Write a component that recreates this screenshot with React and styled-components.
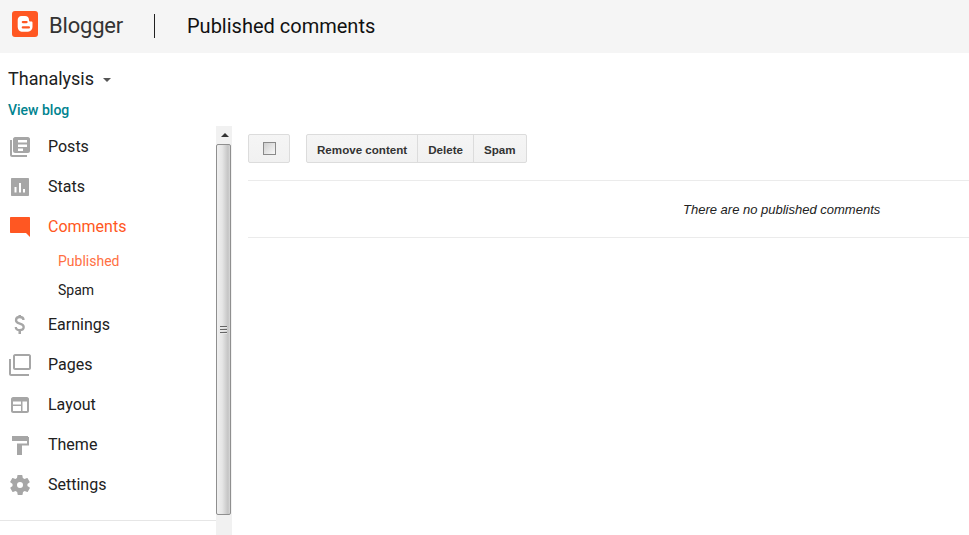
import React from "react";
import styled, { createGlobalStyle } from "styled-components";

const Global = createGlobalStyle`
  html, body { margin: 0; padding: 0; height: 100%; overflow: hidden; background: #fff; }
  body { font-family: Roboto, "Liberation Sans", sans-serif; color: #212121; }
  #root { height: 100%; }
`;
const Page = styled.div`display: flex; flex-direction: column; height: 535px; width: 969px; overflow: hidden;`;
const Header = styled.header`
  height: 53px; flex: none; background: #f5f5f5; display: flex; align-items: center; padding-left: 12px; box-sizing: border-box;
`;
const Logo = styled.svg`width: 26px; height: 26px; flex: none; margin-top: -5px;`;
const Brand = styled.span`font-size: 22px; color: #333; margin-left: 11px; width: 105px; margin-top: -3px; letter-spacing: -0.2px;`;
const Divider = styled.span`width: 1px; height: 24px; background: #212121; margin-right: 32px; margin-top: -1px;`;
const Title = styled.h1`font-size: 20px; font-weight: 400; margin: -1px 0 0; color: #111;`;
const Body = styled.div`display: flex; flex: 1; min-height: 0;`;
const Sidebar = styled.aside`width: 232px; flex: none; display: flex; flex-direction: column; min-height: 0;`;
const BlogHead = styled.div`height: 73px; flex: none; padding: 14px 0 0 8px; box-sizing: border-box;`;
const BlogName = styled.div`font-size: 18px; line-height: 24px; color: #212121; display: flex; align-items: center;`;
const Caret = styled.span`
  width: 0; height: 0; border-left: 4px solid transparent; border-right: 4px solid transparent; border-top: 4px solid #555; margin-left: 9px; margin-top: 1px;
`;
const ViewBlog = styled.a`display: block; margin-top: 10px; font-size: 14px; line-height: 18px; font-weight: 500; color: #00838f;`;
const NavArea = styled.div`display: flex; flex: 1; min-height: 0;`;
const Nav = styled.nav`width: 216px; flex: none; height: 394px; border-bottom: 1px solid #e6e6e6; display: flex; flex-direction: column;`;
const NavItem = styled.div`
  height: 40px; flex: none; display: flex; align-items: center; padding-left: 8px; font-size: 16px; color: ${p => (p.$active ? "#ff5722" : "#212121")};
`;
const NavIcon = styled.svg`width: 24px; height: 24px; margin-right: 16px; flex: none; fill: ${p => (p.$active ? "#ff5722" : "#a6a6a6")};`;
const SubList = styled.div`display: flex; flex-direction: column; height: 58px; flex: none; padding-top: 1px; box-sizing: border-box;`;
const SubItem = styled.div`
  height: 29px; flex: none; line-height: 29px; padding-left: 58px; font-size: 14px; color: ${p => (p.$active ? "#ff7043" : "#212121")};
`;
const Scrollbar = styled.div`width: 16px; flex: none; background: #f1f1f1; display: flex; flex-direction: column;`;
const ArrowBox = styled.div`height: 18px; flex: none; display: flex; align-items: center; justify-content: center;`;
const Arrow = styled.span`width: 0; height: 0; border-left: 4px solid transparent; border-right: 4px solid transparent; border-bottom: 4px solid #333; margin-left: 1px;`;
const Thumb = styled.div`
  height: 371px; box-sizing: border-box; border: 1px solid #8f8f8f; border-radius: 2px; width: 15px; flex: none;
  background: linear-gradient(to right, #f0f0f0 0%, #e6e6e6 40%, #c4c4c4 85%, #d8d8d8 100%);
  display: flex; align-items: center; justify-content: center;
`;
const Grip = styled.span`
  width: 7px; height: 8px; margin-top: 1px;
  background: repeating-linear-gradient(to bottom, #666 0, #666 1px, #e8e8e8 1px, #e8e8e8 2px, transparent 2px, transparent 3px);
`;
const Main = styled.main`flex: 1; min-width: 0; padding: 81px 0 0 16px;`;
const Toolbar = styled.div`display: flex; gap: 16px; height: 46px; border-bottom: 1px solid #ebebeb;`;
const SelectButton = styled.div`
  width: 42px; height: 29px; box-sizing: border-box; border: 1px solid #dcdcdc; border-radius: 2px; background: linear-gradient(#f5f5f5, #f1f1f1); display: flex; align-items: center; justify-content: center;
`;
const Check = styled.span`width: 13px; height: 13px; box-sizing: border-box; border: 1px solid #8a8a8a; background: linear-gradient(135deg, #cfcfcf, #f8f8f8);`;
const ButtonGroup = styled.div`display: flex; height: 29px; box-sizing: border-box; border: 1px solid #dcdcdc; border-radius: 2px; background: linear-gradient(#f5f5f5, #f1f1f1);`;
const ActionButton = styled.div`
  padding: 0 10px; font: bold 11.6px/29px "Liberation Sans", Arial, sans-serif; color: #333; & + & { border-left: 1px solid #dcdcdc; }
`;
const Empty = styled.div`
  height: 56px; border-bottom: 1px solid #ebebeb; font: italic 13px/57px "Liberation Sans", Arial, sans-serif; color: #222; padding-left: 435px;
`;

const items = [
  ["Posts", <><path d="M2 6h2v15h15v2H4c-1 0-2-1-2-2V6z" /><path fillRule="evenodd" d="M7 3h13c1 0 2 1 2 2v12c0 1-1 2-2 2H7c-1 0-2-1-2-2V5c0-1 1-2 2-2zm3 3v2.500h9V6h-9zm0 4.500V13h9v-2.500h-9zm0 4V17h5v-2.500h-5z" /></>],
  ["Stats", <path fillRule="evenodd" d="M4 4h16c.6 0 1 .4 1 1v16c0 .6-.4 1-1 1H4c-.6 0-1-.4-1-1V5c0-.6.4-1 1-1zm2.500 9v5.500h2V13h-2zm4.500-4v9.500h2V9h-2zm4 6v3.500h2V15h-2z" />],
  ["Comments", <path d="M3 3h18c.6 0 1 .4 1 1v19l-4-4H3c-.6 0-1-.4-1-1V4c0-.6.4-1 1-1z" />, true],
];
const rest = [
  ["Earnings", <><path d="M15.500 8c0-2.200-1.500-3-3.800-3S8 6.200 8 8.200c0 2.300 2 2.900 3.800 3.400 1.900.5 3.900 1.200 3.900 3.500 0 2.100-1.800 3.100-4 3.100-2.300 0-3.900-1-3.900-3.200" fill="none" stroke="#a6a6a6" strokeWidth="2.300" /><path d="M10.500 3h2.500v3h-2.500zM10.500 17h2.500v5h-2.500z" /></>],
  ["Pages", <><path d="M1 7h2v15h18v2H3c-1 0-2-1-2-2V7z" /><path fillRule="evenodd" d="M7 2h14c1 0 2 1 2 2v12c0 1-1 2-2 2H7c-1 0-2-1-2-2V4c0-1 1-2 2-2zm0 2v12h14V4H7z" /></>],
  ["Layout", <path fillRule="evenodd" d="M5 5h14c1 0 2 1 2 2v12c0 1-1 2-2 2H5c-1 0-2-1-2-2V7c0-1 1-2 2-2zm0 4.500V12.500h8V9.500H5zm0 4.500V19h8v-5H5zm9.500-4.500V19H19V9.500h-4.500z" />],
  ["Theme", <path d="M4 4h16v1h1v8.500h-7V23H9V11.500h10V9H4V4z" />],
  ["Settings", <path transform="translate(0 1)" d="M19.400 13c.04-.3.1-.7.1-1s-.04-.7-.1-1l2.100-1.600c.2-.2.2-.4.1-.6l-2-3.500c-.1-.2-.4-.3-.6-.2l-2.500 1c-.5-.4-1.100-.7-1.700-1l-.4-2.600c0-.3-.2-.5-.5-.5h-4c-.3 0-.5.2-.5.4l-.4 2.600c-.6.3-1.200.6-1.700 1l-2.500-1c-.2-.1-.5 0-.6.2l-2 3.500c-.1.200-.1.500.1.600L4.600 11c-.1.300-.1.700-.1 1s0 .7.1 1l-2.100 1.600c-.2.2-.2.400-.1.600l2 3.500c.1.2.4.3.6.2l2.500-1c.5.4 1.100.7 1.700 1l.4 2.600c0 .2.2.4.5.4h4c.3 0 .5-.2.5-.4l.4-2.600c.6-.3 1.200-.6 1.700-1l2.500 1c.2.1.5 0 .6-.2l2-3.500c.1-.2.1-.5-.1-.6L19.400 13zM12 15a3 3 0 1 1 0-6 3 3 0 0 1 0 6z" />],
];
const Row = ({ label, icon, active }) => (
  <NavItem $active={active}>
    <NavIcon $active={active} viewBox="0 0 24 24">{icon}</NavIcon>
    {label}
  </NavItem>
);

export default function App() {
  return (
    <Page>
      <Global />
      <Header>
        <Logo viewBox="0 0 26 26">
          <rect width="26" height="26" rx="3" fill="#ff5722" />
          <path fill="#fff" d="M9.500 5h3.500c2.500 0 4 1.500 4 4 0 1 .5 1.500 1.500 1.500h1c.5 0 1 .5 1 1V16c0 2.700-2 4.700-4.500 4.700H9.500c-2 0-3.800-2-3.800-4.700V9c0-2.300 1.500-4 3.800-4z" />
          <rect x="9.700" y="9.900" width="6" height="2.300" rx="1.100" fill="#ff5722" />
          <rect x="9.700" y="15.200" width="8.300" height="2.300" rx="1.100" fill="#ff5722" />
        </Logo>
        <Brand>Blogger</Brand>
        <Divider />
        <Title>Published comments</Title>
      </Header>
      <Body>
        <Sidebar>
          <BlogHead>
            <BlogName>Thanalysis<Caret /></BlogName>
            <ViewBlog>View blog</ViewBlog>
          </BlogHead>
          <NavArea>
            <Nav>
              {items.map(([l, i, a]) => <Row key={l} label={l} icon={i} active={a} />)}
              <SubList>
                <SubItem $active>Published</SubItem>
                <SubItem>Spam</SubItem>
              </SubList>
              {rest.map(([l, i]) => <Row key={l} label={l} icon={i} />)}
            </Nav>
            <Scrollbar>
              <ArrowBox><Arrow /></ArrowBox>
              <Thumb><Grip /></Thumb>
            </Scrollbar>
          </NavArea>
        </Sidebar>
        <Main>
          <Toolbar>
            <SelectButton><Check /></SelectButton>
            <ButtonGroup>
              <ActionButton>Remove content</ActionButton>
              <ActionButton>Delete</ActionButton>
              <ActionButton>Spam</ActionButton>
            </ButtonGroup>
          </Toolbar>
          <Empty>There are no published comments</Empty>
        </Main>
      </Body>
    </Page>
  );
}
